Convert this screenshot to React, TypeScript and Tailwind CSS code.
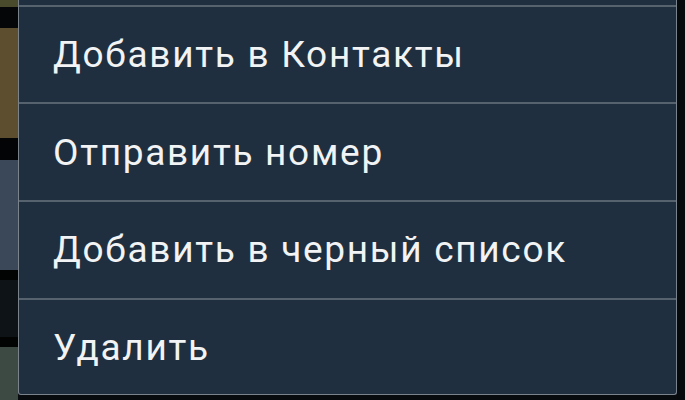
const items = ["Добавить в Контакты", "Отправить номер", "Добавить в черный список", "Удалить"];

// полоски фона списка, который виден слева из-под меню
const strip = [
  { h: "h-[7px]", c: "bg-[#4a4a2c]" },
  { h: "h-[21px]", c: "bg-[#050607]" },
  { h: "h-[110px]", c: "bg-[#5c4e2f]" },
  { h: "h-[22px]", c: "bg-[#030405]" },
  { h: "h-[110px]", c: "bg-[#3b4859]" },
  { h: "h-[10px]", c: "bg-[#020303]" },
  { h: "h-[57px]", c: "bg-[#0e1317]" },
  { h: "h-[10px]", c: "bg-[#020303]" },
  { h: "flex-1", c: "bg-[#3c4a43]" },
];

export default function App() {
  return (
    <div
      className="flex h-[400px] w-[685px] overflow-hidden bg-[#080b0e]"
      style={{ fontFamily: "Roboto, 'Noto Sans', sans-serif" }}
    >
      <div className="flex w-[18px] shrink-0 flex-col">
        {strip.map((s, i) => (
          <div key={i} className={`${s.h} ${s.c}`} />
        ))}
      </div>

      <div className="flex h-[395px] w-[659px] shrink-0 flex-col rounded-b-[3px] border-x border-b border-[#7a838b] bg-[#1f2f3f]">
        <div className="h-[4.5px] shrink-0" />
        {items.map((t) => (
          <div
            key={t}
            className="flex h-[97.75px] shrink-0 items-center border-t-2 border-[#56626d] pl-[34px] text-[37px] leading-none tracking-[1.7px] text-[#f1f3f4]"
          >
            {t}
          </div>
        ))}
      </div>

      <div className="flex-1 bg-[#070a0d]" />
    </div>
  );
}
